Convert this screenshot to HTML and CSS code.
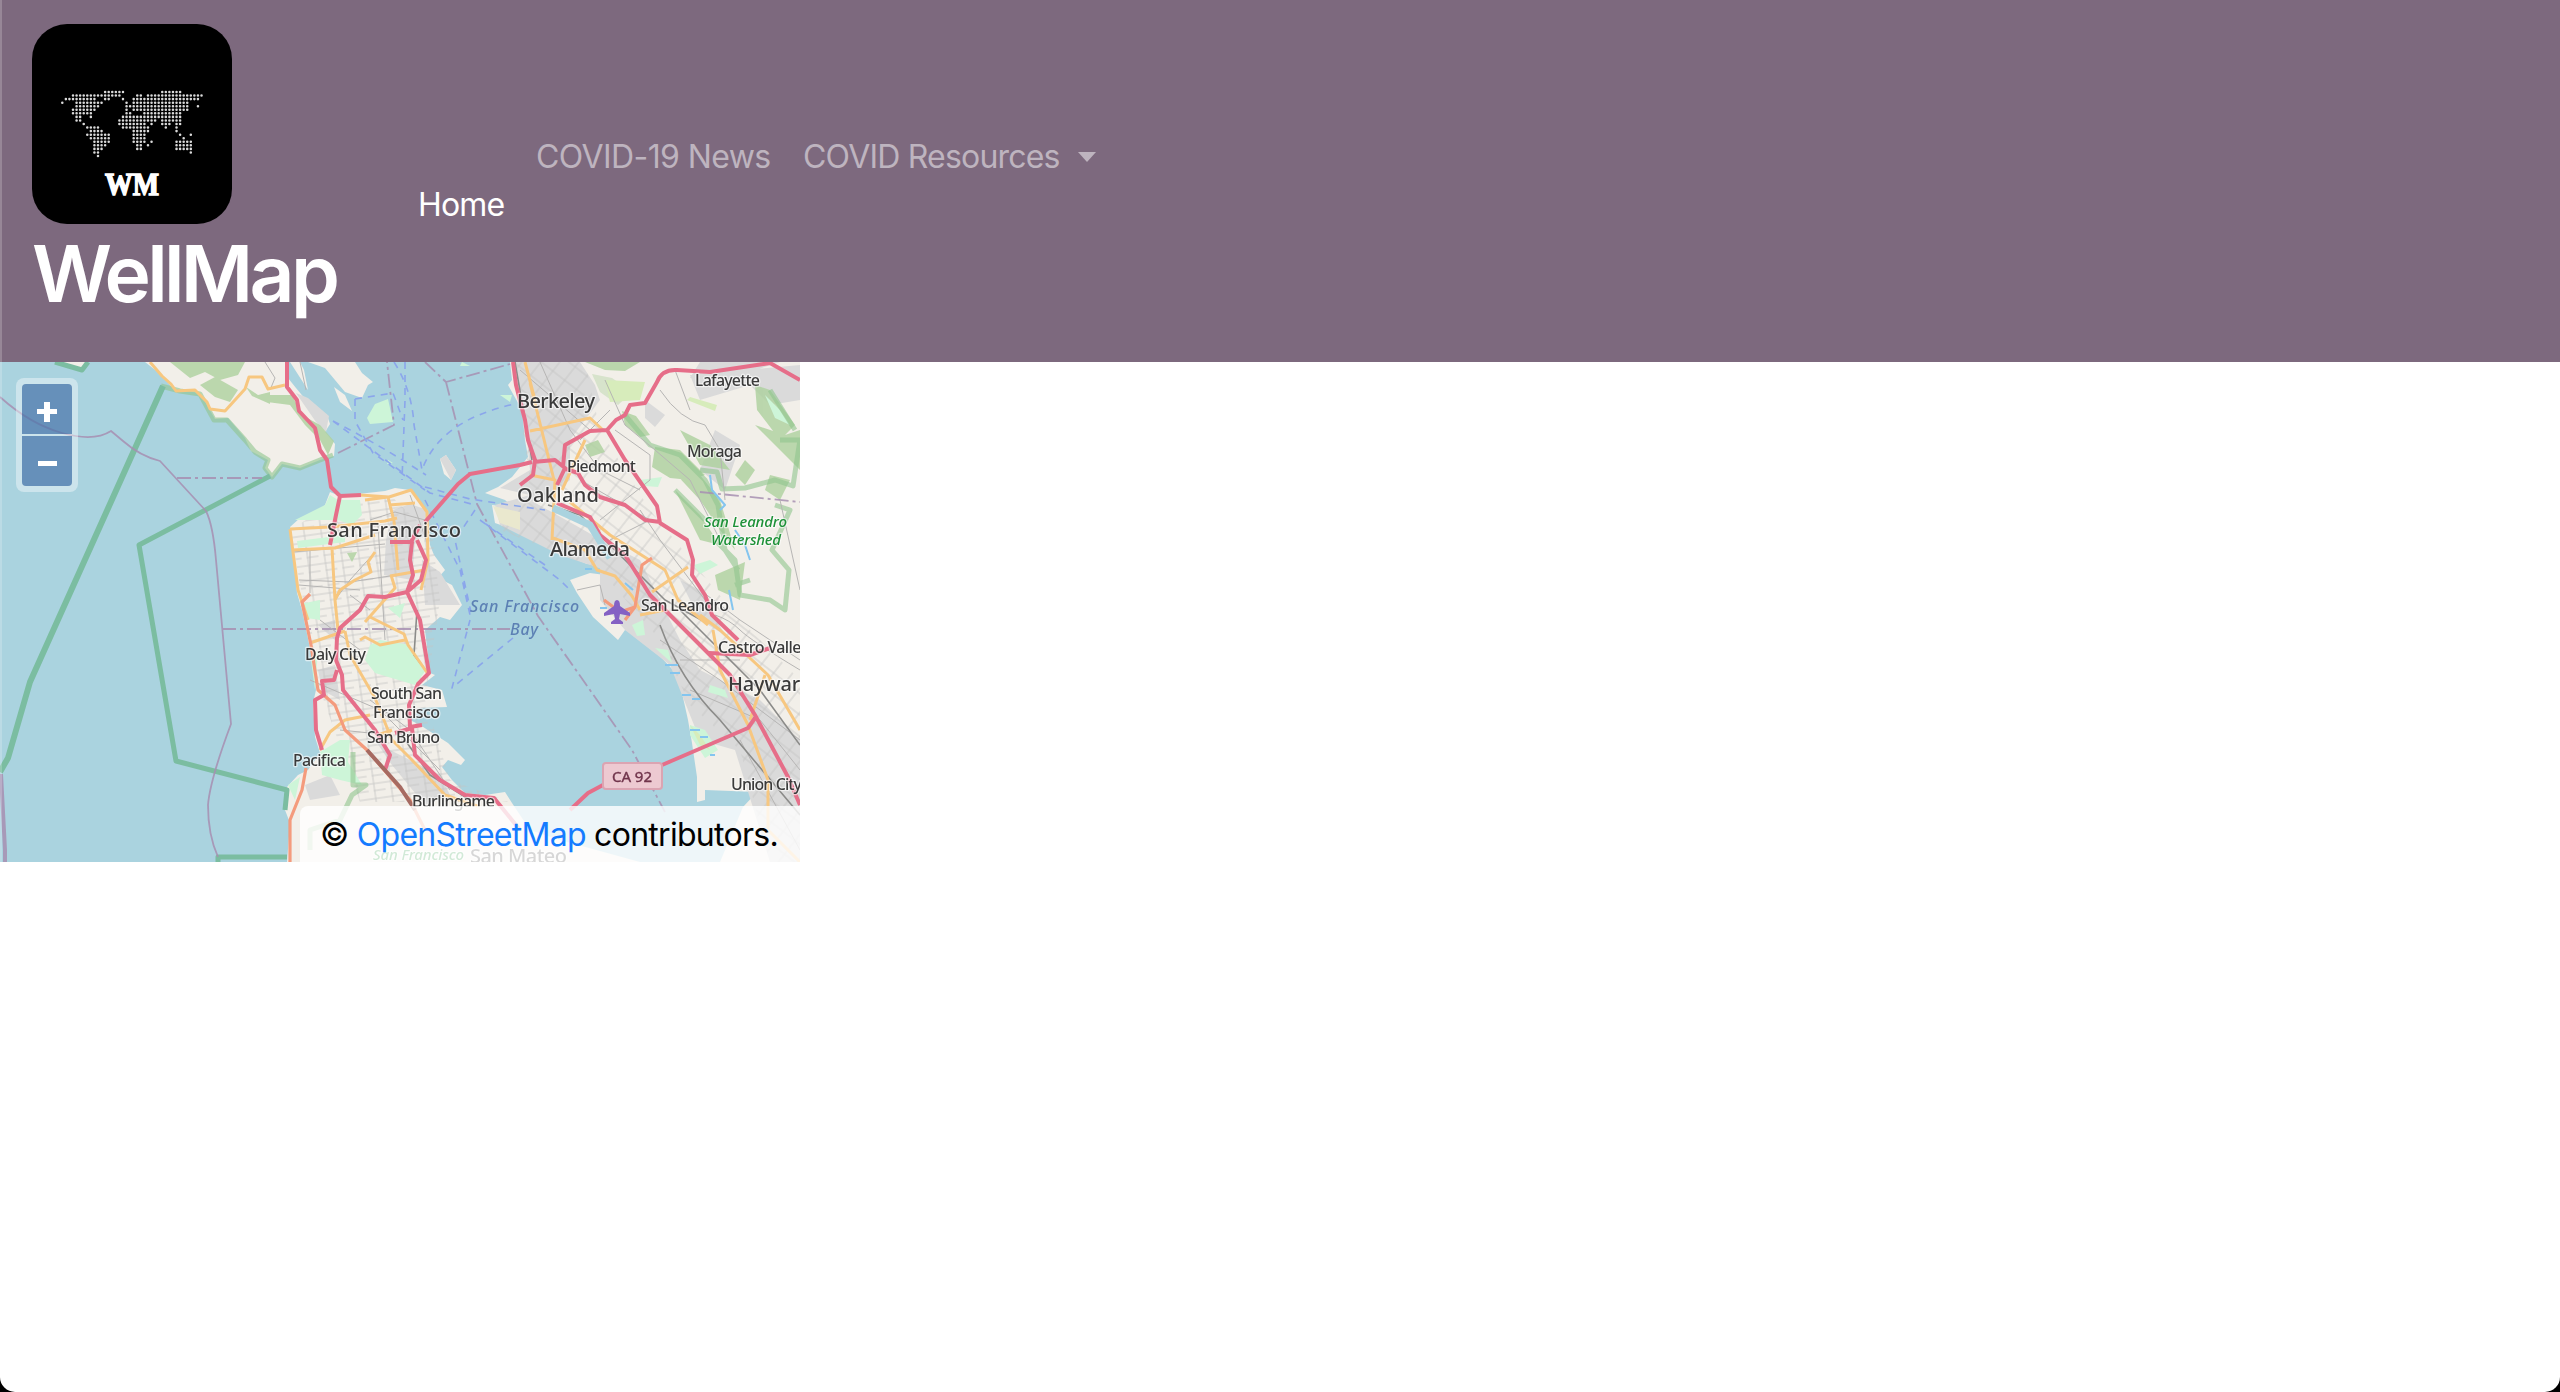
FILE: index.html
```html
<!DOCTYPE html>
<html lang="en">
<head>
<meta charset="utf-8">
<title>WellMap</title>
<link rel="stylesheet" href="styles.css">
</head>
<body>
<div class="page">
<header class="navbar">
  <a class="brand">
    <svg class="logo" viewBox="0 0 200 200">
      <rect width="200" height="200" rx="35"/>
      <path class="dots" transform="translate(30.3 68) scale(3.57 3.556)" d="M12 0H17.01M28 0H33.01M3 1H16.01M21 1H22.01M24 1H39.01M1 2H9.01M12 2H13.01M17 2h.01M20 2H38.01M0 3h.01M4 3H9.01M10 3H11.01M18 3h.01M20 3H35.01M4 4H10.01M18 4H35.01M38 4h.01M3 5H9.01M18 5h.01M20 5H35.01M3 6H8.01M18 6H19.01M23 6H33.01M4 7H5.01M8 7h.01M17 7H33.01M4 8H5.01M16 8H23.01M24 8H26.01M28 8H33.01M6 9h.01M16 9H23.01M25 9h.01M28 9H30.01M32 9H33.01M7 10H10.01M17 10H24.01M29 10h.01M32 10h.01M8 11H11.01M20 11H24.01M32 11h.01M7 12H13.01M20 12H23.01M33 12h.01M36 12h.01M8 13H13.01M20 13H23.01M34 13h.01M9 14H13.01M20 14H23.01M25 14h.01M32 14H36.01M9 15H12.01M21 15H22.01M24 15h.01M32 15H36.01M9 16H11.01M21 16H22.01M32 16H36.01M9 17H10.01M36 17h.01M10 18h.01"/>
      <text class="mono" x="73" y="171" textLength="54" lengthAdjust="spacingAndGlyphs">WM</text>
    </svg>
    <span class="title">WellMap</span>
  </a>
  <nav class="links">
    <a class="link home">Home</a>
    <a class="link news">COVID-19 News</a>
    <a class="link more">COVID Resources<i class="caret"></i></a>
  </nav>
</header>
<main class="map">
<svg class="tiles" viewBox="0 362 800 500">
  <defs>
    <pattern id="streets" width="17" height="15" patternUnits="userSpaceOnUse" patternTransform="rotate(-8)"><path d="M0 3H17M6 0V15M5 10H17" fill="none" stroke="#c4c4c3" stroke-width=".8"/></pattern>
    <pattern id="eaststreets" width="15" height="17" patternUnits="userSpaceOnUse" patternTransform="rotate(38)"><path d="M0 3H15M4 0V17" fill="none" stroke="#c4c4c3" stroke-width=".8"/></pattern>
  </defs>
  <rect class="water" y="362" width="800" height="500"/>
  <!-- land -->
  <g class="land">
    <path d="M145 362L163 376 173 389 200 393 215 419 228 418 245 438 251 451 268 460 265 468 272 477 282 464 300 468 320 460 334 456 335 444 325 432 330 424 327 415 306 400 296 388 288 378 288 362ZM60 362L80 370 88 362Z"/>
    <path d="M290 362L308 390 304 370 300 362ZM308 362L325 368 345 392 362 398 368 385 373 382 362 373 355 362ZM334 387L345 395 352 411 340 402ZM440 459L446 455 456 470 451 480 444 474Z"/>
    <path d="M290 527L300 518 315 516 325 505 330 492 340 496 385 491 395 488 410 490 418 500 427 512 430 545 434 555 445 570 438 578 452 585 462 605 450 620 440 617 425 630 430 673 435 675 422 685 442 690 447 707 420 708 410 720 420 725 448 743 465 760 461 765 448 760 442 767 452 780 465 793 485 795 505 792 512 803 530 830 560 840 640 862 287 862 290 823 285 810 287 787 298 775 308 770 320 753 315 737 313 703 316 690 311 653 302 610 297 593 293 547Z"/>
    <path d="M510 362L512 380 508 385 522 410 525 440 528 457 512 477 498 487 485 493 505 500 514 508 492 505 495 523 515 530 532 540 547 547 587 564 605 555 612 560 605 575 590 573 570 580 577 593 593 617 618 640 625 630 643 635 657 653 673 670 682 693 688 720 692 743 697 777 697 802 705 800 705 790 757 792 743 807 720 862 800 862 800 362Z"/>
  </g>
  <!-- built-up areas -->
  <g class="urban">
    <path d="M296 393L308 398 329 416 326 432 316 422ZM393 510L410 504 428 510 430 535 415 540 412 580 384 575 386 540ZM422 560L440 572 460 605 425 605ZM318 625L335 620 335 640ZM318 670L335 665 340 700 322 690ZM375 740L390 750 440 775 450 795 425 805 392 765ZM305 785L330 775 340 795 310 800ZM440 459L446 455 456 470 451 480Z"/>
    <path d="M512 362H580L595 385 600 400 570 440 570 480 545 500 495 505 530 495 500 488 530 470 524 410ZM495 505L530 500 575 525 610 545 605 570 560 555 500 525ZM600 540L640 560 680 640 700 670 760 700 800 740V862H770L735 750 700 740 670 665 625 630 600 600ZM645 400L665 415 655 427 645 418ZM690 375L800 365V400L770 405 750 385 700 400ZM715 430L740 445 725 490 700 470ZM680 580L700 590 725 635 700 620ZM700 362H780L740 375 690 378Z"/>
  </g>
  <path d="M290 530L330 505 390 495 432 535 440 600 425 700 450 780 510 802 360 802 320 690Z" fill="url(#streets)"/>
  <path d="M512 362H585L600 430 650 510 740 620 800 680V862H770L740 750 690 705 660 640 600 570 500 530 530 480Z" fill="url(#eaststreets)"/>
  <!-- parks and hills -->
  <g class="forest">
    <path d="M170 362H245L238 375 220 380 205 372 190 378ZM200 385L215 377 238 390 230 402 215 397ZM265 395L292 395 302 415 320 425 334 441 328 455 320 440 305 425 290 405 267 402ZM246 387L258 395 270 392 270 404 252 396Z"/>
    <path d="M585 362H640L625 371 605 370ZM655 447L680 450 705 475 690 480 670 478 652 467ZM680 450L720 500 735 550 720 530 700 500 672 470ZM622 411L636 416 650 435 640 437 625 425ZM755 385L770 390 795 425 780 440 757 410ZM675 490L700 515 720 545 700 540ZM715 575L745 562 740 600 718 590ZM585 445L598 440 605 452 590 457ZM745 460L755 470 745 485 735 475ZM755 425L785 435 800 430V470L775 445ZM680 430L710 445 730 470 700 465ZM770 475L790 480 780 500 765 490ZM347 553L357 552 352 562Z"/>
    <path d="M592 374L612 378 632 392 618 405 600 392Z" opacity=".5"/>
  </g>
  <g class="lightpark">
    <path d="M367 418L375 404 388 399 393 422 370 424ZM388 460L393 463 387 464ZM295 520L325 505 330 495 338 500 360 500 362 515 352 525 338 520ZM297 541L345 535 345 542 298 548ZM300 604L320 600 320 620 307 618ZM365 660L370 645 380 640 410 645 426 670 415 685 375 673ZM311 660L318 650 315 690ZM320 752L340 740 350 740 348 762 362 785 340 780 322 775ZM288 785L300 777 295 800ZM640 480L662 477 658 487 645 486ZM694 565L710 560 718 565 700 574ZM632 625L643 620 645 635 637 636ZM655 648L668 650 672 663ZM690 725L705 730 718 750 705 758 690 735ZM710 685L725 690 728 698 708 692ZM500 395L512 395 510 402ZM462 362L470 366 460 366ZM765 395L780 410 790 425 775 418ZM388 608L405 603 400 618Z"/>
    <path d="M605 380L645 382 640 400 610 402ZM690 397L717 405 715 411 687 400ZM690 725L700 735 710 750 700 745Z" fill="#d7ecbb"/>
    <path d="M493 506L520 512 520 530 500 523Z" fill="#eae8ce"/>
  </g>
  <g class="hillline">
    <path d="M161 386L180 391 200 394 214 420 227 420 245 440 255 452 268 460 265 468 272 477 282 464 300 468 320 460 333 455M700 470L717 472 722 489 745 488 775 480 793 486 800 440 780 440M775 505L790 510 772 550 789 570 785 610 770 600 740 595 735 560 715 540M353 752L353 785 366 785 352 795 340 820 310 830 310 850M735 585L750 580M675 490L705 520M770 390L795 430M625 415L650 445 680 455 705 480 718 505 725 550 738 570"/>
  </g>
  <g class="boundary">
    <path d="M163 386L30 682 8 758 0 772" stroke-width="6"/>
    <path d="M270 476L139 545 176 761 287 790 285 810M218 862V857H287M55 362L82 370 88 362"/>
  </g>
  <g class="marine">
    <path d="M0 397Q30 424 62 433T111 431L123 441Q140 456 160 461L206 511Q213 525 216 560L231 724Q210 780 208 805Q208 835 218 857"/>
    <path d="M1 774L5 850V862" stroke-width="4"/>
    <path d="M177 478H262M222 629H510M338 453L394 425 387 362M425 362L446 382 510 364M446 382L477 504 538 616 632 750 665 812M700 492L800 502" stroke-dasharray="14 4 3 4"/>
  </g>
  <g class="ferry">
    <path d="M333 421L430 493 475 505M333 421Q380 445 426 475M355 399V421L373 453 425 490M405 362V400L402 480M394 362Q412 390 414 425L422 470Q440 420 515 404M355 399L393 393 403 420M425 487L470 499 510 505 545 510M425 500L460 570 470 615M475 510L455 540 471 612M545 565L480 520M513 638L452 688 470 620M480 520L560 580 570 590"/>
  </g>
  <!-- streets -->
  <g class="street">
    <path d="M265 362L275 378 270 390M300 362L306 390M293 552L385 544M299 580L350 582 390 576M299 585L360 590M310 550V593M335 600L350 580 375 552M370 520L395 512 425 520M378 525L385 640M410 495L428 545M350 595L370 610M340 730L390 735M320 620L360 650M310 680L380 710 440 770M370 700L410 730 450 790M520 370L590 430M540 362L570 430 600 470M605 380L625 425 655 450 690 480 720 540M660 390Q680 420 705 425L720 450 725 500M675 370L690 410M615 430L650 455 650 480 600 520M600 470L640 490M580 480L650 520 610 540M610 410L580 440M640 510L660 540 705 600M780 500L800 590M700 590L740 620 800 660M715 615Q730 620 740 630T800 670M660 640L720 680 800 740M680 660L740 660M690 690L760 720 800 770M740 740L800 850M577 590L600 585 605 605"/>
  </g>
  <g class="rail"><path d="M417 610L414 655 427 672M515 362L532 460M548 505L580 515 630 565 665 600 705 622M660 625Q680 680 720 720L800 815M680 610L760 690 800 745M405 740L430 775 470 800"/></g>
  <g class="orange">
    <path d="M150 362L162 376 171 384 176 391 195 390 207 402 210 409 225 411 235 400 245 389 249 377 262 377 268 389 285 385"/>
    <path d="M290 529L330 527 385 521 397 518M292 550L335 548 375 535M290 529L298 590 308 620M332 548L335 600 338 630M360 495L389 497 411 490 427 512 428 560 421 590M365 500L388 497 394 521 398 570M389 505L415 503M390 576L425 570M375 552L368 562 371 572 355 580 340 590 335 600M365 622L395 588 391 575M310 643L345 631M370 617L404 634 408 645 428 674M360 640L365 637 380 645 405 640M345 631L350 655 375 698 392 740 412 760 445 795 480 807M320 750L330 732 345 720 370 715M378 735L392 730M530 383L554 480M530 431L590 418 603 430M585 440L562 490M530 475L555 480 552 540M570 502L610 535 665 570 678 600 708 625M553 538L585 550 597 570 615 576 632 596 640 610M652 592L688 567M525 362L535 400M713 630L720 670 748 725 768 780 768 830 800 862M700 615L720 630 768 675 800 730M765 675L750 720M640 615L665 610"/>
  </g>
  <g class="coral"><path d="M310 594L302 602 311 645 318 690 335 705 345 730 367 750 410 800 425 830M306 768L302 790 290 820 290 862M604 600L620 612 635 607 642 565 652 558M635 607L625 620"/></g>
  <g class="motorway">
    <path d="M287 362V387L297 400 299 411 315 428 320 450 327 460 331 487 340 496 336 515 330 545M340 496L361 495M425 522L458 484 470 474 520 465 532 462M390 542L412 542 410 560 413 575 407 592 420 620 429 673 418 684 409 705 410 727 422 725M420 525L411 542M417 540L426 560 421 580 407 592 385 597 368 596 360 610 340 628 337 638 336 660 342 675 343 690 375 730 390 755 385 770M337 670L334 680 322 681 324 695 315 700 316 730 322 750M395 733L412 728 415 755 440 780 465 795 494 798 520 830"/>
    <path d="M513 362L516 385 525 420 528 440 535 460 533 475 520 485M533 462L555 460 565 468 557 485M563 467L565 445 590 431 607 430 616 420 625 415 630 405 645 403 657 382Q662 369 677 370L710 372 770 363 800 380M607 430L625 460 657 506 660 523 687 540 693 560 692 575 705 595 712 615 738 640M660 522L645 520 625 505 600 497 585 485 578 473 563 468M557 503L590 517 600 535 625 555 650 595 680 625 730 675 755 715 788 777 800 805M709 653L750 655 770 648M755 718L748 728 662 765M603 785L588 793 570 810"/>
    <path d="M367 750L400 787 415 810" stroke="#a66a61"/>
  </g>
  <g class="creek"><path d="M710 475L712 490 725 505 720 510M735 530L745 545 750 560M585 569H592M665 665H678M670 673H680M682 695H691M692 699H700M690 730H700M700 737H708M710 755H715M729 590L733 610M600 608H607M625 583L633 590"/><path d="M553 508L590 525 610 558" stroke-width="7" stroke="#aad3df"/></g>
  <path class="plane" d="M617 600q3 0 3 6l10 7v3l-10-2-1 5 4 3v2h-12v-2l4-3-1-5-10 2v-3l10-7q0-6 3-6Z"/>
  <!-- place names -->
  <g class="names">
    <g font-size="20">
      <text x="327" y="537" textLength="134">San Francisco</text><text x="517" y="408" textLength="78">Berkeley</text><text x="517" y="502" textLength="82">Oakland</text><text x="550" y="556" textLength="80">Alameda</text><text x="728" y="691" textLength="84">Hayward</text>
    </g>
    <g font-size="16">
      <text x="695" y="386" textLength="65">Lafayette</text><text x="687" y="457" textLength="55">Moraga</text><text x="567" y="472" textLength="69">Piedmont</text><text x="641" y="611" textLength="88">San Leandro</text><text x="305" y="660" textLength="61">Daly City</text><text x="371" y="699" textLength="71">South San</text><text x="373" y="718" textLength="67">Francisco</text><text x="367" y="743" textLength="73">San Bruno</text><text x="293" y="766" textLength="53">Pacifica</text><text x="412" y="807" textLength="83">Burlingame</text><text x="718" y="653" textLength="91">Castro Valley</text><text x="731" y="790" textLength="71">Union City</text><text x="470" y="863" font-size="20" textLength="97">San Mateo</text>
    </g>
    <g class="greenname"><text x="704" y="527" textLength="83">San Leandro</text><text x="711" y="545" textLength="70">Watershed</text><text x="373" y="860" textLength="91">San Francisco</text></g>
    <g class="bayname"><text x="470" y="612" textLength="109">San Francisco</text><text x="510" y="635" textLength="28">Bay</text></g>
  </g>
  <rect class="shield" x="603" y="763" width="59" height="26" rx="3"/>
  <text class="shieldtext" x="612" y="782" textLength="40">CA 92</text>
</svg>
<div class="zoom"><button class="zin" aria-label="Zoom in"></button><button class="zout" aria-label="Zoom out"></button></div>
<div class="credit">© <a>OpenStreetMap</a> contributors.</div>
</main>
</div>
</body>
</html>
```

FILE: styles.css
```css
* { box-sizing: border-box; }
html { background: #000; }
body { margin: 0; font: 32px/48px Inter, "Liberation Sans", sans-serif; }
.page { position: relative; height: 1392px; background: #fff; border-radius: 0 0 15px 15px; overflow: hidden; }
.page::before { content: ""; position: absolute; z-index: 3; left: 0; top: 0; width: 2px; height: 862px; background: rgba(255,255,255,.2); }
.navbar { display: flex; height: 362px; padding: 24px 32px; background: #7d697e; }
.brand { display: flex; flex-direction: column; width: 370px; color: #fff; }
.logo { width: 200px; height: 200px; }
.dots { fill: none; stroke: #dadada; stroke-width: .72; stroke-linecap: round; stroke-dasharray: 0 1; }
.mono { font: bold 31px "Liberation Serif", serif; fill: #fff; stroke: #fff; stroke-width: 1.5; }
.title { margin-top: 2px; font-size: 78.5px; line-height: 96px; font-weight: 600; letter-spacing: -3.7px; }
.links { display: flex; align-items: flex-start; padding: 109px 0 0 16px; }
.link { color: #beb4bf; white-space: nowrap; letter-spacing: -.8px; }
.home { width: 118px; padding-top: 48px; color: #fff; }
.news { width: 267px; letter-spacing: -.6px; }
.more { display: flex; align-items: center; gap: 18px; }
.caret { border: 9px solid transparent; border-top: 10px solid #beb4bf; border-bottom: 0; }
.map { position: relative; width: 800px; height: 500px; overflow: hidden; }
.tiles { display: block; width: 800px; height: 500px; fill: none; stroke-linejoin: round; filter: blur(.7px); }
.water { fill: #aad3df; }
.land { fill: #f2efe9; }
.urban { fill: #dadada; }
.forest { fill: #add19e; opacity: .8; }
.lightpark { fill: #cdf5d8; }
.hillline { stroke: #8fc58d; stroke-width: 5; opacity: .6; }
.boundary { stroke: #7bbda1; stroke-width: 5; }
.marine { stroke: #a78fb2; stroke-width: 1.8; opacity: .85; }
.ferry { stroke: #8ba6eb; stroke-width: 1.6; stroke-dasharray: 7 6; }
.street { stroke: #b6b5b4; stroke-width: 1; }
.rail { stroke: #8b8b89; stroke-width: 1.6; }
.orange { stroke: #f7c780; stroke-width: 3; }
.coral { stroke: #f49b7d; stroke-width: 3.2; }
.motorway { stroke: #e66e89; stroke-width: 4; }
.creek { stroke: #84c5ef; stroke-width: 2; }
.plane { fill: #8461c4; }
.names { font-family: "Noto Sans", sans-serif; font-weight: 500; fill: #3a3a3a; stroke: rgba(255,255,255,.6); stroke-width: 2.5px; paint-order: stroke; }
.greenname { font-size: 15px; font-style: italic; fill: #1d9138; }
.bayname { font-size: 16px; font-style: italic; fill: #5c80b4; stroke: none; }
.shield { fill: #edc9d1; stroke: #dba4b2; stroke-width: 2; }
.shieldtext { font: 15px "Noto Sans", sans-serif; fill: #71354c; stroke: #71354c; stroke-width: .4; }
.zoom { position: absolute; left: 16px; top: 16px; display: grid; gap: 2px; padding: 6px; border-radius: 8px; background: rgba(255,255,255,.4); }
.zoom button { width: 50px; height: 50px; padding: 0; border: 0; background: linear-gradient(#fff, #fff) 16px 24px / 19px 5px no-repeat rgba(0,60,136,.5); }
.zoom .zin { border-radius: 4px 4px 0 0; background: linear-gradient(#fff, #fff) 15px 25px / 20px 5px no-repeat, linear-gradient(#fff, #fff) 22px 18px / 6px 20px no-repeat, rgba(0,60,136,.5); }
.zoom .zout { border-radius: 0 0 4px 4px; background-position: 16px 25px; }
.credit { position: absolute; right: 0; bottom: 0; width: 500px; height: 56px; padding: 5px 20px; border-radius: 8px 0 0; background: rgba(255,255,255,.8); white-space: nowrap; letter-spacing: -.72px; }
.credit a { color: #147bff; }
```
